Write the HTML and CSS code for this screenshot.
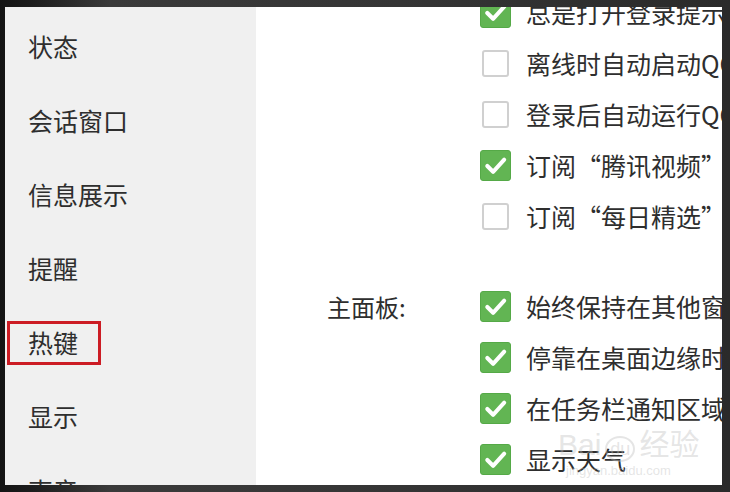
FILE: index.html
```html
<!DOCTYPE html>
<html lang="zh-CN">
<head>
<meta charset="utf-8">
<title>设置</title>
<link rel="stylesheet" href="styles.css">
</head>
<body>
<div class="frame">
  <nav class="sidebar">
    <div class="nav-item">状态</div>
    <div class="nav-item">会话窗口</div>
    <div class="nav-item">信息展示</div>
    <div class="nav-item">提醒</div>
    <div class="nav-item nav-marked">热键<span class="mark-box"></span></div>
    <div class="nav-item">显示</div>
    <div class="nav-item">声音</div>
  </nav>
  <main class="content">
    <div class="groups">
      <section class="group">
        <div class="group-label"></div>
        <div class="options">
          <div class="row"><span class="box checked"><svg viewBox="0 0 30 30"><polyline points="6.5,15.5 12.5,21.5 24,9"/></svg></span><span class="txt">总是打开登录提示</span></div>
          <div class="row"><span class="box"></span><span class="txt">离线时自动启动QQ宠物</span></div>
          <div class="row"><span class="box"></span><span class="txt">登录后自动运行QQ宠物</span></div>
          <div class="row"><span class="box checked"><svg viewBox="0 0 30 30"><polyline points="6.5,15.5 12.5,21.5 24,9"/></svg></span><span class="txt">订阅“腾讯视频”</span></div>
          <div class="row"><span class="box"></span><span class="txt">订阅“每日精选”</span></div>
        </div>
      </section>
      <section class="group group-main">
        <div class="group-label">主面板:</div>
        <div class="options">
          <div class="row"><span class="box checked"><svg viewBox="0 0 30 30"><polyline points="6.5,15.5 12.5,21.5 24,9"/></svg></span><span class="txt">始终保持在其他窗口前端</span></div>
          <div class="row"><span class="box checked"><svg viewBox="0 0 30 30"><polyline points="6.5,15.5 12.5,21.5 24,9"/></svg></span><span class="txt">停靠在桌面边缘时自动隐藏</span></div>
          <div class="row"><span class="box checked"><svg viewBox="0 0 30 30"><polyline points="6.5,15.5 12.5,21.5 24,9"/></svg></span><span class="txt">在任务栏通知区域显示QQ图标</span></div>
          <div class="row"><span class="box checked"><svg viewBox="0 0 30 30"><polyline points="6.5,15.5 12.5,21.5 24,9"/></svg></span><span class="txt">显示天气</span></div>
        </div>
      </section>
    </div>
    <div class="watermark"><span class="wm-big">Bai<span class="wm-du">du</span>经验</span><span class="wm-small">jingyan.baidu.com</span></div>
  </main>
</div>
</body>
</html>
```

FILE: styles.css
```css
html, body {
  margin: 0;
  padding: 0;
}
body {
  width: 730px;
  height: 492px;
  overflow: hidden;
  background: #262626;
  font-family: "Noto Sans CJK SC", "Noto Sans", sans-serif;
  color: #2e2e2e;
}
.frame {
  box-sizing: border-box;
  width: 730px;
  height: 492px;
  display: flex;
  padding: 7px 8px 7px 5px;
  background: linear-gradient(90deg, #141414 0px, #1c1c1c 30px, #3a3a3a 110px, #353535 400px, #2a2a2a 730px);
}
.sidebar {
  width: 251px;
  flex-shrink: 0;
  background: #f0f0f0;
  padding-top: 2px;
  overflow: hidden;
}
.nav-item {
  position: relative;
  height: 74px;
  line-height: 74px;
  padding-left: 23px;
  font-size: 25px;
  white-space: nowrap;
}
.mark-box {
  position: absolute;
  left: 2px;
  top: 16px;
  width: 88px;
  height: 38px;
  border: 3px solid #cc1c24;
}
.content {
  flex: 1;
  position: relative;
  background: #fff;
  overflow: hidden;
  white-space: nowrap;
}
.groups {
  margin-top: -20px;
  display: flex;
  flex-direction: column;
  gap: 39px;
}
.group {
  display: flex;
  padding-left: 71px;
}
.group-label {
  width: 153px;
  flex-shrink: 0;
  height: 51px;
  line-height: 51px;
  font-size: 24px;
}
.options {
  display: flex;
  flex-direction: column;
}
.row {
  height: 51px;
  display: flex;
  align-items: center;
  gap: 15px;
  font-size: 25px;
}
.box {
  box-sizing: border-box;
  width: 27px;
  height: 27px;
  margin: 0 2px;
  flex-shrink: 0;
  border: 2px solid #d0d0d0;
  border-radius: 3px;
  background: #fff;
}
.box.checked {
  width: 31px;
  height: 31px;
  margin: 0;
  border: 1px solid #55a947;
  background: #62b553;
}
.box svg {
  display: block;
  width: 29px;
  height: 29px;
}
.box polyline {
  fill: none;
  stroke: #fff;
  stroke-width: 4.2;
  stroke-linecap: round;
  stroke-linejoin: round;
}
.txt {
  line-height: 1;
}
.watermark {
  position: absolute;
  left: 302px;
  top: 420px;
  display: flex;
  flex-direction: column;
  color: rgba(190, 190, 190, 0.4);
  font-family: "Liberation Sans", "Noto Sans CJK SC", sans-serif;
}
.wm-big {
  font-size: 30px;
  line-height: 36px;
}
.wm-du {
  display: inline-block;
  border: 2px solid rgba(190, 190, 190, 0.4);
  border-radius: 50%;
  font-size: 18px;
  line-height: 22px;
  padding: 0 3px;
  margin: 0 4px;
}
.wm-small {
  font-size: 13px;
  line-height: 16px;
  padding-left: 8px;
}
```
